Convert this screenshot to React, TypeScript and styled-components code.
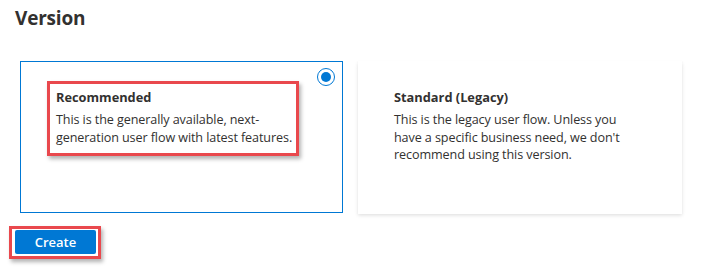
import React from "react";
import styled, { createGlobalStyle } from "styled-components";

const Global = createGlobalStyle`
  html, body { margin: 0; padding: 0; background: #ffffff; }
  body { font-family: "Open Sans", "Noto Sans", sans-serif; color: #323130; }
`;

const Page = styled.div`
  display: flex;
  flex-direction: column;
  padding: 4px 0 0 15px;
  width: 710px;
  height: 275px;
  box-sizing: border-box;
`;

const Title = styled.h2`
  margin: 0;
  font-size: 19px;
  line-height: 28px;
  font-weight: 700;
  letter-spacing: -0.2px;
  color: #323130;
`;

const Options = styled.div`
  display: flex;
  gap: 15px;
  margin: 29px 0 0 5px;
`;

const Card = styled.div<{ $selected?: boolean }>`
  position: relative;
  box-sizing: border-box;
  width: ${(p) => (p.$selected ? 323 : 324)}px;
  height: ${(p) => (p.$selected ? 152 : 153)}px;
  padding: 19px 0 0 26px;
  background: #ffffff;
  border: 1px solid ${(p) => (p.$selected ? "#0078d4" : "transparent")};
  box-shadow: ${(p) =>
    p.$selected
      ? "none"
      : "0 1.6px 3.6px rgba(0,0,0,0.13), 0 0.3px 0.9px rgba(0,0,0,0.11)"};
`;

const Radio = styled.span`
  position: absolute;
  top: 6px;
  right: 7px;
  width: 18px;
  height: 18px;
  box-sizing: border-box;
  border-radius: 50%;
  border: 1.5px solid #0078d4;
  display: flex;
  align-items: center;
  justify-content: center;
  &::after {
    content: "";
    width: 10px;
    height: 10px;
    border-radius: 50%;
    background: #0078d4;
  }
`;

const Callout = styled.div<{ $marked?: boolean; $width: number }>`
  box-sizing: border-box;
  width: ${(p) => p.$width}px;
  padding: 5px 0 7px 6px;
  border: 3px solid ${(p) => (p.$marked ? "#e9484d" : "transparent")};
  box-shadow: ${(p) => (p.$marked ? "2px 3px 4px rgba(0,0,0,0.3)" : "none")};
`;

const OptionName = styled.div`
  font-size: 12.8px;
  line-height: 17px;
  font-weight: 700;
  margin-bottom: 5px;
`;

const OptionText = styled.div`
  font-size: 12.6px;
  line-height: 17.5px;
  font-weight: 400;
  letter-spacing: -0.1px;
`;

const ButtonMark = styled.div`
  align-self: flex-start;
  margin: 12px 0 0 -6px;
  padding: 1px 2px 2px 3px;
  border: 3px solid #e9484d;
  box-shadow: 2px 3px 4px rgba(0,0,0,0.3);
`;

const PrimaryButton = styled.button`
  display: block;
  width: 81px;
  height: 24px;
  border: none;
  border-radius: 2px;
  background: #0078d4;
  color: #ffffff;
  font-family: "Open Sans", "Noto Sans", sans-serif;
  font-size: 13px;
  font-weight: 600;
  padding: 0;
`;

export default function App() {
  return (
    <>
      <Global />
      <Page>
        <Title>Version</Title>
        <Options>
          <Card $selected>
            <Radio />
            <Callout $marked $width={252}>
              <OptionName>Recommended</OptionName>
              <OptionText>
                This is the generally available, next-generation user flow with latest features.
              </OptionText>
            </Callout>
          </Card>
          <Card>
            <Callout $width={246}>
              <OptionName>Standard (Legacy)</OptionName>
              <OptionText>
                This is the legacy user flow. Unless you have a specific business need, we don't recommend using this version.
              </OptionText>
            </Callout>
          </Card>
        </Options>
        <ButtonMark>
          <PrimaryButton>Create</PrimaryButton>
        </ButtonMark>
      </Page>
    </>
  );
}
